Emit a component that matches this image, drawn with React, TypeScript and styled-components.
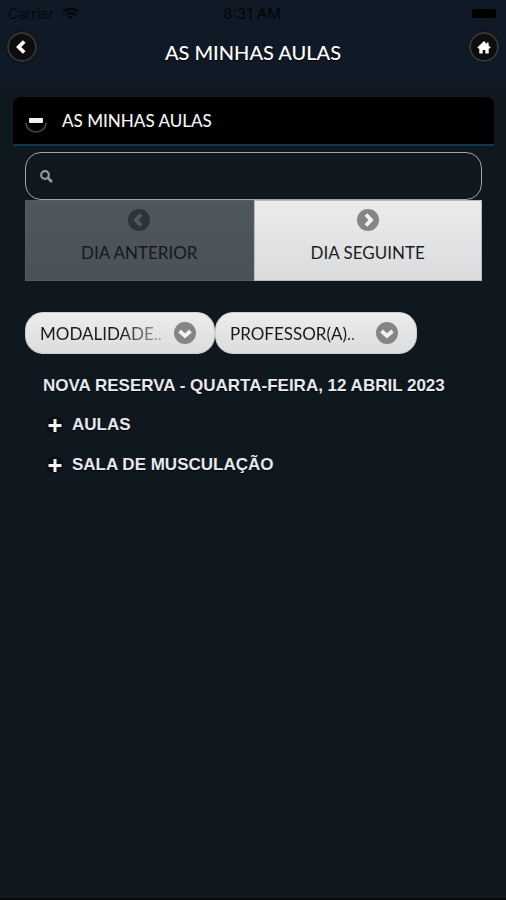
import React, { useState } from "react";
import styled, { createGlobalStyle } from "styled-components";

const GlobalStyle = createGlobalStyle`
  * { box-sizing: border-box; }
  body {
    margin: 0;
    background: #10181f;
    color: #fff;
    font-family: Lato, "Open Sans", sans-serif;
  }
  button, input, select { font-family: inherit; margin: 0; }
`;

const Page = styled.div`
  min-height: 100vh;
  display: flex;
  flex-direction: column;
  background: #10181f;
  border-bottom: 2px solid #07090c;
`;

const TopArea = styled.div`
  background: #101a26;
  padding-bottom: 12px;
`;

const StatusBar = styled.div`
  display: grid;
  grid-template-columns: 1fr auto 1fr;
  align-items: center;
  height: 26px;
  padding: 0 10px 0 8px;
  color: #04070b;
  font-family: Inter, "Liberation Sans", sans-serif;
  font-size: 14px;
`;

const Carrier = styled.span`
  display: flex;
  align-items: center;
  gap: 8px;
`;

const Clock = styled.span`
  font-size: 15px;
  font-weight: 500;
`;

const Battery = styled.span`
  justify-self: end;
  width: 24px;
  height: 9px;
  border-radius: 2px;
  background: #000;
`;

const Header = styled.header`
  display: grid;
  grid-template-columns: 30px 1fr 30px;
  align-items: start;
  height: 46px;
  padding: 6px 7px 0;
`;

const Title = styled.h1`
  margin: 5px 0 0;
  text-align: center;
  font-size: 20px;
  line-height: 30px;
  font-weight: 500;
  text-shadow: 0 1px 1px #000;
`;

const RoundButton = styled.button`
  display: grid;
  place-items: center;
  width: 30px;
  height: 30px;
  padding: 0;
  border: 2px solid #343536;
  border-radius: 50%;
  background: #0d0d0d;
  box-shadow: 0 0 2px #000;
  color: #fff;
`;

const Panel = styled.main`
  margin: 13px 12px 0 13px;
`;

const PanelToggle = styled.button`
  display: flex;
  align-items: center;
  gap: 15px;
  width: 100%;
  height: 49px;
  padding: 0 12px;
  border: 0;
  border-bottom: 2px solid #0d3a4f;
  border-radius: 8px 8px 0 0;
  background: #000;
  color: #f2f2f2;
  font-size: 17px;
  font-weight: 500;
  line-height: 24px;
  text-align: left;
`;

const PanelBody = styled.div`
  padding: 6px 12px 0;
`;

const SearchBox = styled.label`
  display: flex;
  align-items: center;
  gap: 8px;
  height: 48px;
  padding: 0 14px;
  border: 1px solid #a3a3a5;
  border-radius: 16px;
  color: #97999c;
`;

const SearchInput = styled.input`
  flex: 1;
  min-width: 0;
  height: 40px;
  border: 0;
  outline: 0;
  background: transparent;
  color: #fff;
  font-size: 17px;
`;

const DayNav = styled.nav`
  display: grid;
  grid-template-columns: 1fr 1fr;
`;

const DayButton = styled.button`
  display: flex;
  flex-direction: column;
  align-items: center;
  gap: 10px;
  height: 81px;
  padding: 8px 0 0;
  border: 1px solid #b9babb;
  background: linear-gradient(#ebebeb, #dadcdd);
  color: #1c1c1c;
  font-size: 17px;
  line-height: 24px;

  &:disabled {
    border-color: #555b62;
    background: linear-gradient(#51575e, #4a5159);
    color: #14191e;
  }
`;

const Filters = styled.div`
  display: flex;
  margin-top: 31px;
`;

const FilterBox = styled.label<{ $basis: number }>`
  display: flex;
  align-items: center;
  flex: 0 1 ${(p) => p.$basis}px;
  min-width: 0;
  height: 42px;
  padding: 0 18px 0 14px;
  border: 1px solid #cfd0d1;
  border-radius: 18px;
  background: linear-gradient(#ececec, #dbddde);
  color: #191919;
`;

const FilterSelect = styled.select<{ $fade: string }>`
  flex: 1;
  min-width: 0;
  height: 40px;
  padding: 0;
  border: 0;
  outline: 0;
  appearance: none;
  background: transparent;
  color: inherit;
  font-size: 17px;
  mask-image: linear-gradient(90deg, #000 ${(p) => p.$fade}, rgba(0, 0, 0, 0.3) 90%);
`;

const Schedule = styled.section`
  padding: 17px 18px 0;
  font-family: "Liberation Sans", Arial, sans-serif;
  color: #e6e9f0;
  text-shadow: 0 1px 1px #000;
`;

const ScheduleTitle = styled.h2`
  margin: 0;
  font-size: 17px;
  line-height: 30px;
  font-weight: 700;
`;

const GroupList = styled.ul`
  display: flex;
  flex-direction: column;
  gap: 10px;
  margin: 9px 0 0;
  padding: 0;
  list-style: none;
`;

const GroupButton = styled.button`
  display: flex;
  align-items: center;
  gap: 8px;
  height: 30px;
  padding: 0 3px;
  border: 0;
  background: transparent;
  color: inherit;
  font-size: 17px;
  font-weight: 700;
  text-shadow: inherit;
`;

const WifiIcon = () => (
  <svg width="17" height="13" viewBox="0 0 17 13" fill="none" stroke="currentColor" strokeWidth="2.3" aria-hidden="true">
    <path d="M1 4.8C5.2.8 11.8.8 16 4.8M3.9 7.8c2.6-2.4 6.6-2.4 9.2 0" />
    <path d="M8.5 12.5 5.9 9.9c1.5-1.3 3.700-1.3 5.2 0z" fill="currentColor" stroke="none" />
  </svg>
);

const ChevronLeft = () => (
  <svg width="14" height="16" viewBox="0 0 14 16" fill="none" stroke="currentColor" strokeWidth="3.8" aria-hidden="true">
    <path d="M9.2 2.500 3.700 8l5.500 5.500" />
  </svg>
);

const HomeIcon = () => (
  <svg width="14" height="13" viewBox="0 0 14 13" fill="currentColor" aria-hidden="true">
    <path d="M7 0 .3 6.500 1.300 7.500H2.300V12.500H5.700V9H8.300v3.500H11.700V7.500H12.700L13.700 6.500 11.600 4.500V1.500H10V3z" />
  </svg>
);

const MinusBadge = () => (
  <svg width="22" height="28" viewBox="0 0 22 28" fill="none" aria-hidden="true">
    <path d="M1 16a10 9 0 0 0 20 0" stroke="#454545" strokeWidth="1.6" />
    <rect x="4" y="11" width="14" height="5" rx="1" fill="#f2f2f2" />
  </svg>
);

const SearchIcon = () => (
  <svg width="13" height="14" viewBox="0 0 13 14" fill="none" stroke="currentColor" aria-hidden="true">
    <circle cx="5" cy="6" r="3.8" strokeWidth="2.2" />
    <path d="m8 9 4 4" strokeWidth="2.6" />
  </svg>
);

const PlusIcon = () => (
  <svg width="18" height="18" viewBox="0 0 18 18" aria-hidden="true">
    <circle cx="9" cy="9" r="9" fill="#0b1015" />
    <path d="M2.500 9.500h13M9 3v13" stroke="#f3f3f3" strokeWidth="3" />
  </svg>
);

const discPaths = {
  left: "M13 5.500 8 11l5 5.500",
  right: "M9 5.500 14 11l-5 5.500",
  down: "M5.500 9 11 14l5.500-5",
};

interface DiscProps {
  direction: keyof typeof discPaths;
  disc?: string;
  stroke?: string;
}

const ArrowDisc = ({ direction, disc = "#858585", stroke = "#f2f2f2" }: DiscProps) => (
  <svg width="22" height="22" viewBox="0 0 22 22" fill="none" aria-hidden="true">
    <circle cx="11" cy="11" r="11" fill={disc} />
    <path d={discPaths[direction]} stroke={stroke} strokeWidth="3.8" />
  </svg>
);

const filters = [
  { name: "Modalidade", text: "MODALIDADE..", basis: 190, fade: "60%" },
  { name: "Professor(a)", text: "PROFESSOR(A)..", basis: 202, fade: "80%" },
];

const groups = ["AULAS", "SALA DE MUSCULAÇÃO"];

export default function App() {
  const [open, setOpen] = useState(true);

  return (
    <>
      <GlobalStyle />
      <Page>
        <TopArea>
          <StatusBar>
            <Carrier>Carrier <WifiIcon /></Carrier>
            <Clock>8:31 AM</Clock>
            <Battery />
          </StatusBar>
          <Header>
            <RoundButton aria-label="Voltar"><ChevronLeft /></RoundButton>
            <Title>AS MINHAS AULAS</Title>
            <RoundButton aria-label="Início"><HomeIcon /></RoundButton>
          </Header>
        </TopArea>
        <Panel>
          <PanelToggle aria-expanded={open} onClick={() => setOpen(!open)}>
            <MinusBadge />
            AS MINHAS AULAS
          </PanelToggle>
          {open && (
            <PanelBody>
              <SearchBox>
                <SearchIcon />
                <SearchInput type="search" aria-label="Pesquisar" />
              </SearchBox>
              <DayNav>
                <DayButton disabled>
                  <ArrowDisc direction="left" disc="#2d333a" stroke="#535a61" />
                  DIA ANTERIOR
                </DayButton>
                <DayButton>
                  <ArrowDisc direction="right" />
                  DIA SEGUINTE
                </DayButton>
              </DayNav>
              <Filters>
                {filters.map((f) => (
                  <FilterBox key={f.name} $basis={f.basis}>
                    <FilterSelect aria-label={f.name} $fade={f.fade}>
                      <option>{f.text}</option>
                    </FilterSelect>
                    <ArrowDisc direction="down" />
                  </FilterBox>
                ))}
              </Filters>
              <Schedule>
                <ScheduleTitle>NOVA RESERVA - QUARTA-FEIRA, 12 ABRIL 2023</ScheduleTitle>
                <GroupList>
                  {groups.map((g) => (
                    <li key={g}>
                      <GroupButton><PlusIcon />{g}</GroupButton>
                    </li>
                  ))}
                </GroupList>
              </Schedule>
            </PanelBody>
          )}
        </Panel>
      </Page>
    </>
  );
}
